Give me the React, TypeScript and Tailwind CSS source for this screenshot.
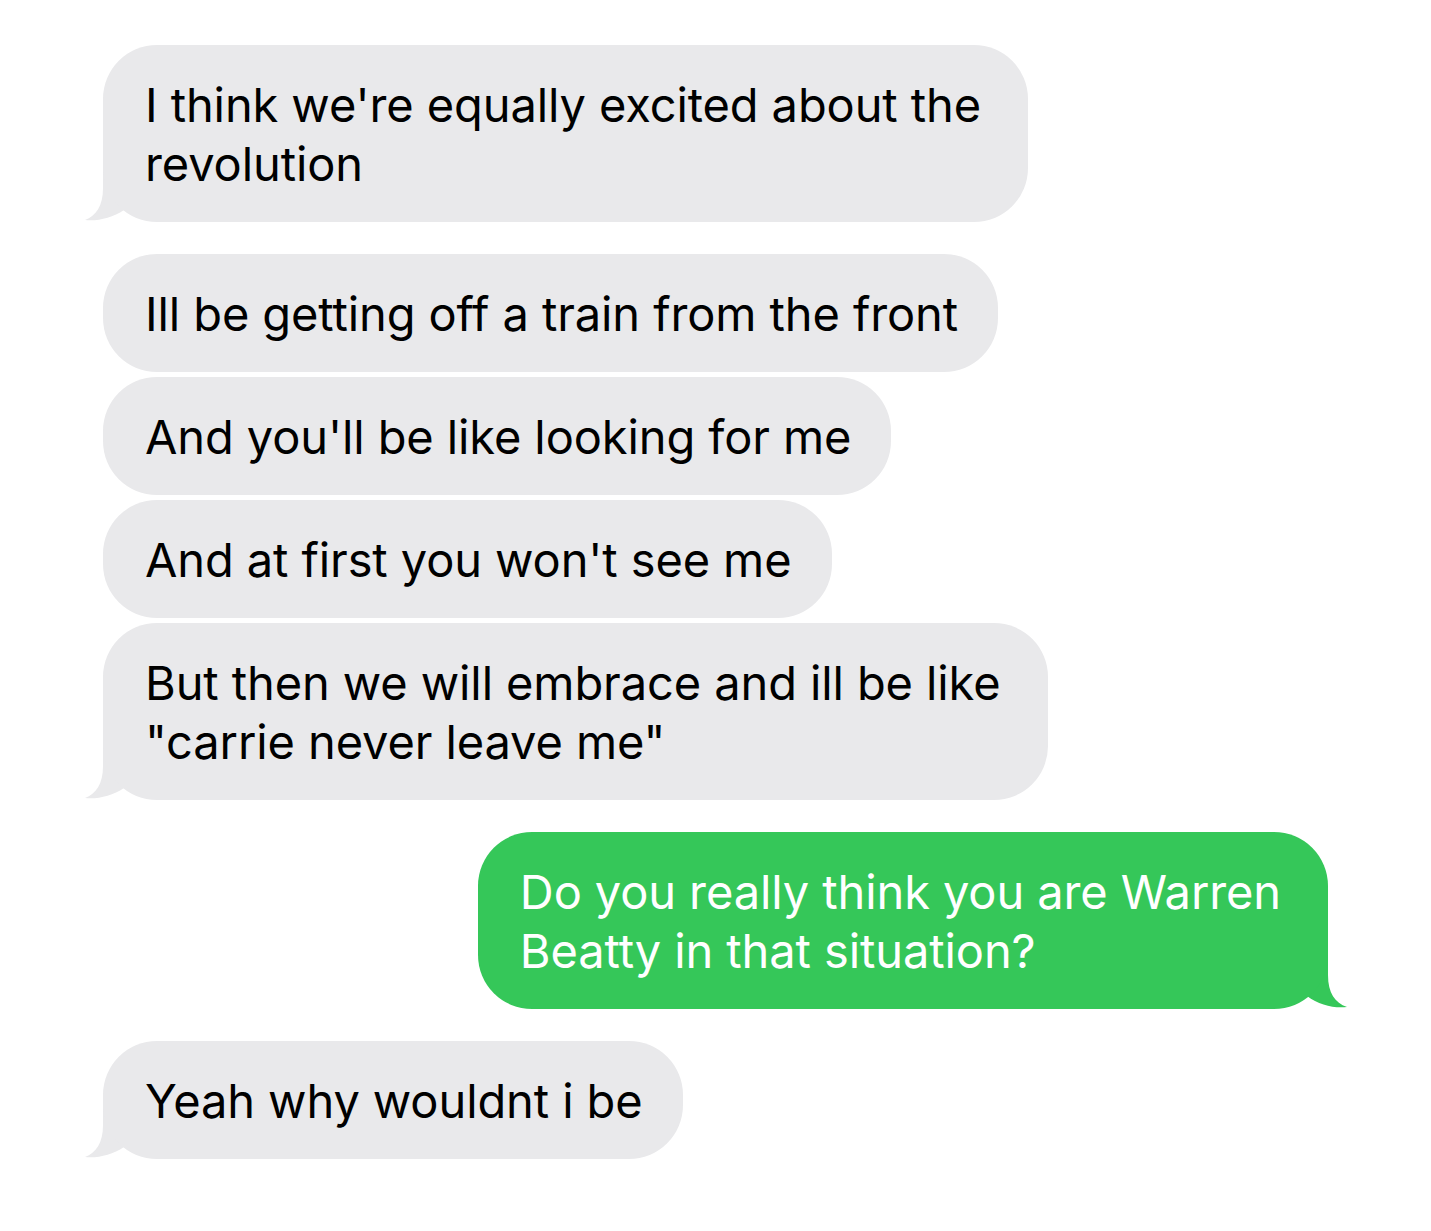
import React from "react";

type Msg = { from: "them" | "me"; lines: string[]; tail?: boolean; gapTop: number };

const messages: Msg[] = [
  { from: "them", lines: ["I think we're equally excited about the", "revolution"], tail: true, gapTop: 0 },
  { from: "them", lines: ["Ill be getting off a train from the front"], gapTop: 32 },
  { from: "them", lines: ["And you'll be like looking for me"], gapTop: 5 },
  { from: "them", lines: ["And at first you won't see me"], gapTop: 5 },
  { from: "them", lines: ["But then we will embrace and ill be like", "\"carrie never leave me\""], tail: true, gapTop: 5 },
  { from: "me", lines: ["Do you really think you are Warren", "Beatty in that situation?"], tail: true, gapTop: 32 },
  { from: "them", lines: ["Yeah why wouldnt i be"], tail: true, gapTop: 32 },
];

function LeftTail() {
  return (
    <svg
      className="absolute bottom-0 left-[-20px] w-[62px] h-[62px]"
      viewBox="-20 -60 62 62"
    >
      <path
        d="M0 -60 L0 -32 C0 -14 -7 -4 -18 0 C-6 1.5 9 -2 21 -10 L42 -10 L42 -60 Z"
        fill="#e9e9eb"
      />
    </svg>
  );
}

function RightTail() {
  return (
    <svg
      className="absolute bottom-0 right-[-20px] w-[62px] h-[62px]"
      viewBox="-42 -60 62 62"
    >
      <path
        d="M0 -60 L0 -32 C0 -14 7 -4 19 0 C6 1.5 -9 -2 -21 -11 L-42 -11 L-42 -60 Z"
        fill="#35c759"
      />
    </svg>
  );
}

function Bubble({ msg }: { msg: Msg }) {
  const mine = msg.from === "me";
  const multi = msg.lines.length > 1;
  return (
    <div
      className={`relative ${mine ? "self-end" : "self-start"}`}
      style={{ marginTop: msg.gapTop }}
    >
      {msg.tail && (mine ? <RightTail /> : <LeftTail />)}
      <div
        className={`relative rounded-[54px] pl-[42px] py-[29.5px] text-[47px] leading-[59px] tracking-[-0.1px] ${
          multi ? "pr-[47px]" : "pr-[40px]"
        } ${mine ? "bg-[#35c759] text-white" : "bg-[#e9e9eb] text-black"}`}
      >
        {msg.lines.map((l) => (
          <div key={l} className="whitespace-nowrap">
            {l}
          </div>
        ))}
      </div>
    </div>
  );
}

export default function App() {
  return (
    <div
      className="w-[1431px] h-[1231px] bg-white overflow-hidden"
      style={{ fontFamily: "Inter, 'Noto Sans', sans-serif" }}
    >
      <div className="flex flex-col px-[103px] pt-[45px]">
        {messages.map((m, i) => (
          <Bubble key={i} msg={m} />
        ))}
      </div>
    </div>
  );
}
